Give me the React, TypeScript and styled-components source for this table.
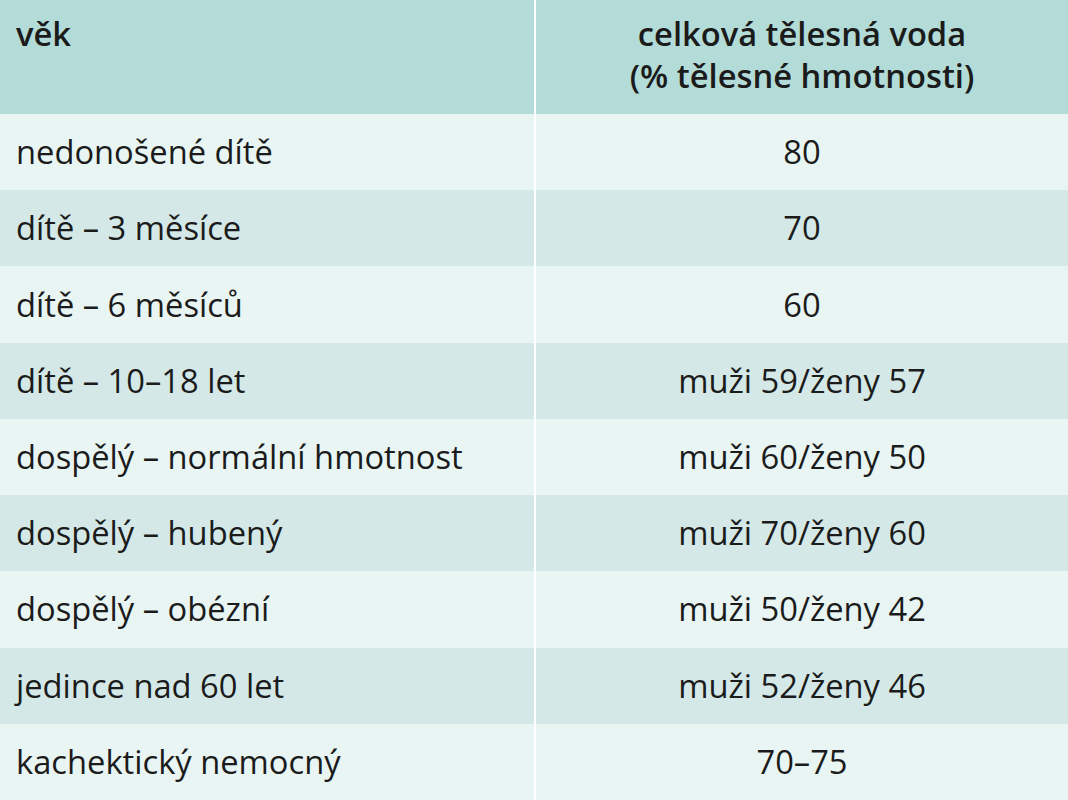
import React from "react";
import styled, { createGlobalStyle } from "styled-components";

const GlobalStyle = createGlobalStyle`
  html, body { margin: 0; padding: 0; background: #ffffff; }
  body { font-family: "Open Sans", "Noto Sans", sans-serif; color: #1b1b1b; }
`;

const Table = styled.div`
  width: 1068px;
  height: 800px;
  display: grid;
  grid-template-columns: 534px 2px 1fr;
  grid-template-rows: 114px repeat(9, 1fr);
  background: #ffffff;
`;

const Cell = styled.div<{ $tone: "head" | "light" | "dark"; $align: "left" | "center" }>`
  display: flex;
  align-items: ${(p) => (p.$tone === "head" ? "flex-start" : "center")};
  justify-content: ${(p) => (p.$align === "left" ? "flex-start" : "center")};
  text-align: ${(p) => p.$align};
  padding: ${(p) => (p.$tone === "head" ? "13px 16px 0" : "0 16px")};
  background: ${(p) =>
    p.$tone === "head" ? "#b3dcd8" : p.$tone === "light" ? "#e8f5f3" : "#d4e9e7"};
  font-size: 32.7px;
  line-height: 42px;
  font-weight: ${(p) => (p.$tone === "head" ? 600 : 400)};
  letter-spacing: 0;
  color: #1b1b1b;
  white-space: nowrap;
`;

const Divider = styled.div`
  background: #ffffff;
`;

const rows: [string, string][] = [
  ["nedonošené dítě", "80"],
  ["dítě – 3 měsíce", "70"],
  ["dítě – 6 měsíců", "60"],
  ["dítě – 10–18 let", "muži 59/ženy 57"],
  ["dospělý – normální hmotnost", "muži 60/ženy 50"],
  ["dospělý – hubený", "muži 70/ženy 60"],
  ["dospělý – obézní", "muži 50/ženy 42"],
  ["jedince nad 60 let", "muži 52/ženy 46"],
  ["kachektický nemocný", "70–75"],
];

export default function App() {
  return (
    <>
      <GlobalStyle />
      <Table>
        <Cell $tone="head" $align="left">věk</Cell>
        <Divider />
        <Cell $tone="head" $align="center">
          celková tělesná voda
          <br />
          (% tělesné hmotnosti)
        </Cell>
        {rows.map(([a, b], i) => {
          const tone = i % 2 === 0 ? "light" : "dark";
          return (
            <React.Fragment key={a}>
              <Cell $tone={tone} $align="left">{a}</Cell>
              <Divider />
              <Cell $tone={tone} $align="center">{b}</Cell>
            </React.Fragment>
          );
        })}
      </Table>
    </>
  );
}
